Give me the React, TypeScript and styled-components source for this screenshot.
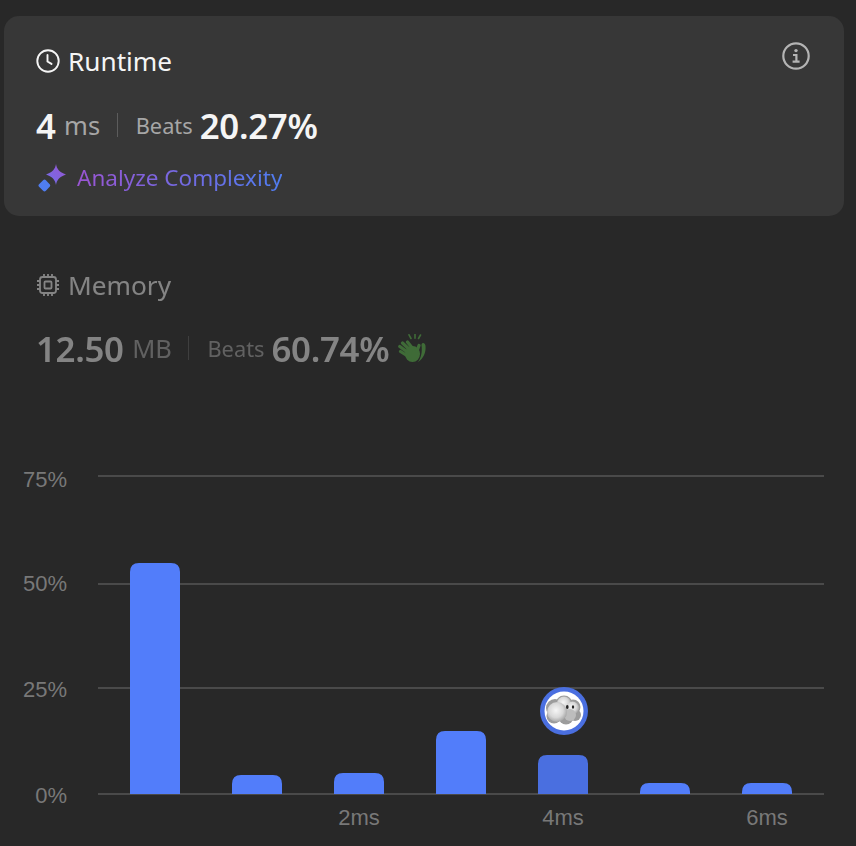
import styled, { createGlobalStyle } from "styled-components";

const colors = {
  page: "#282828",
  card: "#373737",
  white: "#f5f5f5",
  muted: "#a6a6a6",
  blue: "#527dfa",
  grid: "#4a4a4a",
  axis: "#787878",
};

const uiFont = `"Noto Sans", "Open Sans", sans-serif`;

const GlobalStyle = createGlobalStyle`
  html, body {
    margin: 0;
    background: ${colors.page};
  }
  body {
    font-family: ${uiFont};
  }
`;

const Page = styled.div`
  width: 856px;
  height: 846px;
  overflow: hidden;
  display: flex;
  flex-direction: column;
  padding: 16px 12px 0 4px;
  box-sizing: border-box;
`;

const Card = styled.section`
  height: 200px;
  border-radius: 15px;
  background: ${colors.card};
  padding: 29px 32px 0;
  box-sizing: border-box;
  position: relative;
`;

const Plain = styled.section`
  padding: 53px 32px 0;
  opacity: 0.45;
`;

const Title = styled.div`
  display: flex;
  align-items: center;
  gap: 8px;
  font-size: 26.2px;
  line-height: 32px;
  height: 32px;
  color: ${colors.white};
`;

const Stats = styled.div<{ $top: number }>`
  display: flex;
  align-items: center;
  margin-top: ${({ $top }) => $top}px;
  height: 44px;
`;

const Big = styled.span`
  font-size: 34.8px;
  font-weight: 600;
  color: ${colors.white};
  letter-spacing: -0.3px;
`;

const Unit = styled.span`
  font-size: 25.5px;
  color: ${colors.muted};
  margin-left: 8.5px;
`;

const Divider = styled.span`
  width: 1px;
  height: 24px;
  background: #5c5c5c;
  margin: 0 18px 0 16.5px;
`;

const Label = styled.span`
  font-size: 21.8px;
  color: ${colors.muted};
  margin-right: 7px;
`;

const Analyze = styled.div`
  display: flex;
  align-items: center;
  gap: 11px;
  margin-top: 15px;
  font-size: 22.5px;
  line-height: 32px;
`;

const GradientText = styled.span`
  background: linear-gradient(90deg, #9a55d2 0%, #4f7df0 100%);
  -webkit-background-clip: text;
  background-clip: text;
  color: transparent;
`;

const InfoButton = styled.div`
  position: absolute;
  top: 25px;
  right: 33px;
  width: 30px;
  height: 30px;
  color: #b4b4b4;
`;

const ClapWrap = styled.span`
  display: flex;
  margin-left: 9px;
  margin-top: 2px;
`;

const Chart = styled.svg`
  display: block;
  margin: auto -12px 0 -4px;
  flex: none;
`;

const ClockIcon = () => (
  <svg width="24" height="24" viewBox="0 0 24 24" fill="none" stroke="currentColor" strokeWidth="1.9" strokeLinecap="round">
    <circle cx="12" cy="12" r="10.7" />
    <path d="M11.5 6v6.5l4 2.4" />
  </svg>
);

const ChipIcon = () => (
  <svg width="24" height="24" viewBox="0 0 24 24" fill="none" stroke="currentColor" strokeWidth="1.8">
    <rect x="4" y="4" width="16" height="16" rx="2.5" />
    <rect x="8.5" y="8.5" width="7" height="7" rx="1" />
    <path d="M8 1v3M12 1v3M16 1v3M8 20v3M12 20v3M16 20v3M1 8h3M1 12h3M1 16h3M20 8h3M20 12h3M20 16h3" />
  </svg>
);

const InfoIcon = () => (
  <svg width="30" height="30" viewBox="0 0 30 30" fill="none" stroke="currentColor">
    <circle cx="15" cy="15" r="12.7" strokeWidth="2.2" />
    <circle cx="15" cy="9.6" r="1.7" fill="currentColor" stroke="none" />
    <path d="M12 14h3.4v6.4M11.6 20.6h7" strokeWidth="2.2" />
  </svg>
);

const SparkIcon = () => (
  <svg width="30" height="32" viewBox="0 0 30 32">
    <defs>
      <linearGradient id="spark" x1="0" y1="1" x2="1" y2="0">
        <stop offset="0" stopColor="#6f6ee8" />
        <stop offset="1" stopColor="#9a55d2" />
      </linearGradient>
    </defs>
    <path d="M20 2c.8 5 3.200 8 10 10.500-6.800 2.500-9.200 5.500-10 10.500-.8-5-3.200-8-10-10.500 6.800-2.500 9.200-5.500 10-10.500z" fill="url(#spark)" />
    <path d="M8.500 17.500q.8 0 1.400.8l4 4.300q.7.900 0 1.800l-4 4.300q-1.400 1.400-2.800 0l-4.300-4.300q-.8-.9 0-1.800l4.300-4.300q.7-.8 1.400-.8z" fill="#4f7df0" />
  </svg>
);

const ClapIcon = () => (
  <svg width="30" height="30" viewBox="0 0 30 30" fill="#5bbd4b" stroke="#5bbd4b">
    <ellipse cx="14.500" cy="20" rx="7.500" ry="8" stroke="none" />
    <path d="M12 23.500 2.500 17.500M12 20 1.800 12.500M13 17 4.500 9M15 15 9.500 8M19 17l2-5.500" fill="none" strokeWidth="3.200" strokeLinecap="round" />
    <path d="M25 9c1.500 0 2.500 1.500 2.500 3 .5 6-1.500 12-7.500 16 3-4 4.500-10 3.500-17 0-1 .5-2 1.500-2z" stroke="none" />
    <path d="M11 .8l2 3.700M17 .3v4M22.500 1l-2 3.500" fill="none" strokeWidth="1.600" strokeLinecap="round" />
  </svg>
);

const ticks = [
  { label: "75%", y: 476, textY: 487 },
  { label: "50%", y: 584, textY: 591 },
  { label: "25%", y: 688, textY: 697 },
  { label: "0%", y: 794, textY: 803 },
];

const bars = [
  { x: 130, top: 563, fill: colors.blue },
  { x: 232, top: 775, fill: colors.blue },
  { x: 334, top: 773, fill: colors.blue },
  { x: 436, top: 731, fill: colors.blue },
  { x: 538, top: 755, fill: "#4a6fe0" },
  { x: 640, top: 783, fill: colors.blue },
  { x: 742, top: 783, fill: colors.blue },
];

const xLabels = [
  { label: "2ms", x: 359 },
  { label: "4ms", x: 563 },
  { label: "6ms", x: 767 },
];

const barPath = (x: number, top: number) => {
  const r = Math.min(9, 794 - top);
  return `M${x} 794V${top + r}Q${x} ${top} ${x + r} ${top}H${x + 50 - r}Q${x + 50} ${top} ${x + 50} ${top + r}V794Z`;
};

const CHART_TOP = 440;

const RuntimeChart = () => (
  <Chart width="856" height={846 - CHART_TOP} viewBox={`0 ${CHART_TOP} 856 ${846 - CHART_TOP}`}>
    <defs>
      <radialGradient id="puff" cx="0.45" cy="0.42" r="0.6">
        <stop offset="0" stopColor="#f6f6f6" />
        <stop offset="0.6" stopColor="#d8d8d8" />
        <stop offset="1" stopColor="#a2a2a2" />
      </radialGradient>
      <filter id="soft" x="-10%" y="-10%" width="120%" height="120%">
        <feGaussianBlur stdDeviation="0.6" />
      </filter>
    </defs>
    {ticks.map((t) => (
      <g key={t.label}>
        <rect x="98" y={t.y - 1} width="726" height="2" fill={colors.grid} />
        <text x="67" y={t.textY} textAnchor="end" fontFamily="Liberation Sans" fontSize="22" fill={colors.axis}>
          {t.label}
        </text>
      </g>
    ))}
    {bars.map((b) => (
      <path key={b.x} d={barPath(b.x, b.top)} fill={b.fill} />
    ))}
    {xLabels.map((l) => (
      <text key={l.label} x={l.x} y="825" textAnchor="middle" fontFamily="Liberation Sans" fontSize="22" fill={colors.axis}>
        {l.label}
      </text>
    ))}
    <circle cx="564" cy="711" r="24" fill="#4a6fe0" />
    <circle cx="564" cy="711" r="19.500" fill="#ffffff" />
    <g filter="url(#soft)">
      <g fill="#9c9c9c">
        <circle cx="555" cy="708" r="9" />
        <circle cx="564" cy="704" r="8.500" />
        <circle cx="573" cy="707" r="7.500" />
        <circle cx="575" cy="715" r="6" />
        <circle cx="566" cy="717" r="7.500" />
        <circle cx="554" cy="716" r="7.500" />
      </g>
      <circle cx="564" cy="703.500" r="7" fill="url(#puff)" />
      <circle cx="572.500" cy="708" r="6.500" fill="url(#puff)" />
      <circle cx="570" cy="715" r="6" fill="#bdbdbd" />
      <circle cx="557" cy="712" r="10" fill="url(#puff)" />
    </g>
    <ellipse cx="567.300" cy="707" rx="1.300" ry="1.900" fill="#222" />
    <ellipse cx="573" cy="707" rx="1.200" ry="1.800" fill="#222" />
  </Chart>
);

export default function App() {
  return (
    <Page>
      <GlobalStyle />
      <Card>
        <Title>
          <ClockIcon />
          Runtime
        </Title>
        <Stats $top={26}>
          <Big>4</Big>
          <Unit>ms</Unit>
          <Divider />
          <Label>Beats</Label>
          <Big>20.27%</Big>
        </Stats>
        <Analyze>
          <SparkIcon />
          <GradientText>Analyze Complexity</GradientText>
        </Analyze>
        <InfoButton>
          <InfoIcon />
        </InfoButton>
      </Card>
      <Plain>
        <Title>
          <ChipIcon />
          Memory
        </Title>
        <Stats $top={25}>
          <Big>12.50</Big>
          <Unit>MB</Unit>
          <Divider />
          <Label>Beats</Label>
          <Big>60.74%</Big>
          <ClapWrap>
            <ClapIcon />
          </ClapWrap>
        </Stats>
      </Plain>
      <RuntimeChart />
    </Page>
  );
}
